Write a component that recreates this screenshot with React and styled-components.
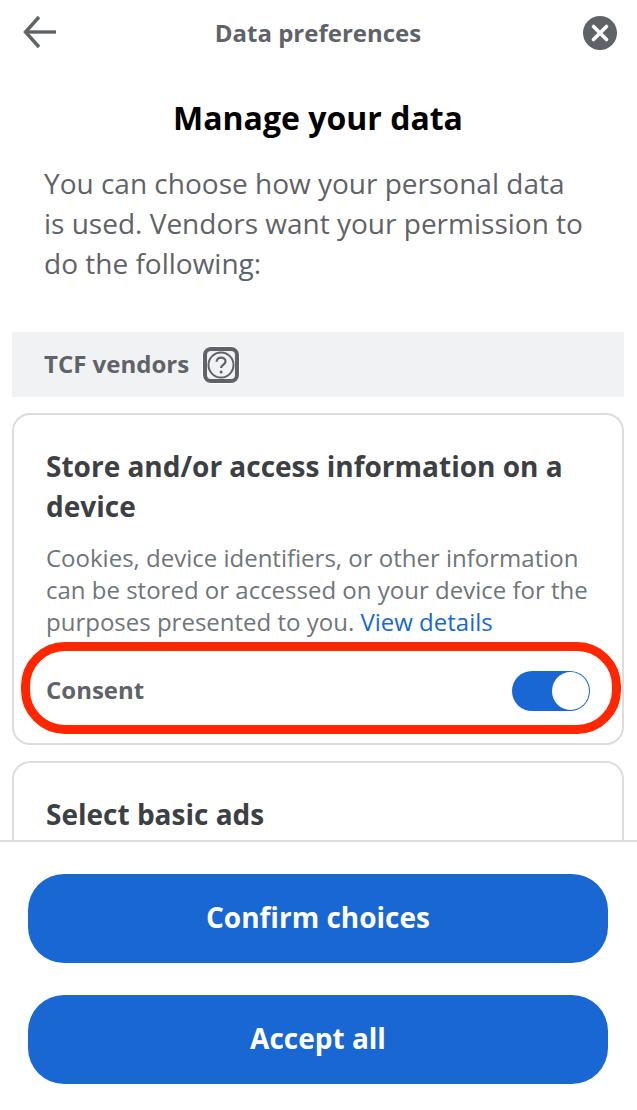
import React from 'react'
import styled, { createGlobalStyle } from 'styled-components'

const Global = createGlobalStyle`
  html, body { margin: 0; padding: 0; background: #fff; }
  body { font-family: "Open Sans", "Noto Sans", sans-serif; }
`

const Page = styled.div`
  width: 637px;
  height: 1110px;
  display: flex;
  flex-direction: column;
  overflow: hidden;
`
const Scroll = styled.div`
  flex: 1;
  min-height: 0;
  overflow: hidden;
`
const Header = styled.div`
  height: 66px;
  display: flex;
  align-items: center;
  justify-content: space-between;
  padding: 0 19px 0 22px;
`
const HeaderTitle = styled.div`
  font-size: 24px;
  font-weight: 700;
  color: #5f6368;
  margin: -2px 4px 0 0;
`
const IconButton = styled.div`
  width: 36px;
  height: 36px;
  display: flex;
  align-items: center;
  justify-content: center;
`
const Title = styled.h1`
  margin: 30px 1px 0 0;
  font-size: 32px;
  line-height: 44px;
  font-weight: 700;
  color: #000;
  text-align: center;
`
const Intro = styled.p`
  margin: 23px 0 0;
  padding: 0 50px 0 44px;
  font-size: 28px;
  line-height: 40px;
  color: #5f6368;
`
const Band = styled.div`
  margin: 49px 13px 0 12px;
  height: 65px;
  padding-left: 32px;
  display: flex;
  align-items: center;
  gap: 13px;
  background: #f1f2f4;
  font-size: 24px;
  font-weight: 700;
  color: #5f6368;
`
const BandLabel = styled.span`
  margin-top: -2px;
`
const HelpIcon = styled.span`
  display: flex;
`
const Card = styled.section`
  position: relative;
  margin: ${p => p.$top}px 13px 0 12px;
  box-sizing: border-box;
  height: ${p => p.$height}px;
  padding: 31px 24px 0 32px;
  border: 2px solid #dcdce1;
  border-radius: 18px;
  background: #fff;
`
const CardTitle = styled.h2`
  margin: 0;
  font-size: 28px;
  line-height: 40px;
  font-weight: 700;
  color: #3c4043;
`
const CardText = styled.p`
  margin: 16px 0 0;
  font-size: 24px;
  line-height: 32px;
  color: #70757a;
`
const Details = styled.a`
  color: #1967d2;
`
const ConsentRow = styled.div`
  display: flex;
  align-items: center;
  justify-content: space-between;
  margin-top: 29px;
  height: 44px;
  padding-right: 8px;
  font-size: 24px;
  font-weight: 700;
  color: #5f6368;
`
const Toggle = styled.span`
  width: 78px;
  height: 40px;
  margin-top: 4px;
  box-sizing: border-box;
  border-radius: 20px;
  background: #1967d2;
  padding: 1px;
  display: flex;
  justify-content: flex-end;
`
const Knob = styled.span`
  width: 37px;
  height: 38px;
  border-radius: 50%;
  background: #fff;
`
const Highlight = styled.div`
  position: absolute;
  left: 7px;
  top: 227px;
  width: 600px;
  height: 92px;
  box-sizing: border-box;
  border: 9px solid #ff2600;
  border-radius: 44px;
  pointer-events: none;
`
const Footer = styled.div`
  flex: none;
  height: 270px;
  box-sizing: border-box;
  border-top: 2px solid #dcdce1;
  background: #fff;
  padding: 32px 29px 0 28px;
  display: flex;
  flex-direction: column;
  gap: 32px;
`
const Button = styled.button`
  height: 89px;
  border: 0;
  border-radius: 36px;
  padding: 0 0 4px;
  background: #1967d2;
  color: #fff;
  font-family: inherit;
  font-size: 28px;
  font-weight: 700;
`

const App = () => (
  <Page>
    <Global />
    <Scroll>
      <Header>
        <IconButton>
          <svg width="36" height="36" viewBox="0 0 36 36" fill="none" stroke="#5f6368" strokeWidth="3.4">
            <path d="M34 17H4" />
            <path d="M17 2L3.5 17L17 32" />
          </svg>
        </IconButton>
        <HeaderTitle>Data preferences</HeaderTitle>
        <IconButton>
          <svg width="34" height="34" viewBox="0 0 34 34">
            <circle cx="17" cy="17" r="17" fill="#5f6368" />
            <path d="M10.5 10.5L23.5 23.5M23.5 10.5L10.5 23.5" stroke="#fff" strokeWidth="3.6" strokeLinecap="round" />
          </svg>
        </IconButton>
      </Header>
      <Title>Manage your data</Title>
      <Intro>You can choose how your personal data is used. Vendors want your permission to do the following:</Intro>
      <Band>
        <BandLabel>TCF vendors</BandLabel>
        <HelpIcon>
          <svg width="38" height="38" viewBox="0 0 38 38" fill="none">
            <rect width="38" height="38" rx="11" fill="#fff" />
            <rect x="3" y="3" width="32" height="32" rx="6" fill="#f1f2f4" stroke="#5f6368" strokeWidth="4" />
            <circle cx="19" cy="19" r="12.500" stroke="#5f6368" strokeWidth="2" />
            <path d="M14.600 15.800c0-2.500 2-4.200 4.500-4.200s4.400 1.600 4.400 3.800c0 3.200-4.400 3.100-4.400 6.600" stroke="#5f6368" strokeWidth="2.200" />
            <circle cx="19.100" cy="26" r="1.500" fill="#5f6368" />
          </svg>
        </HelpIcon>
      </Band>
      <Card $top={16} $height={332}>
        <CardTitle>Store and/or access information on a device</CardTitle>
        <CardText>
          Cookies, device identifiers, or other information can be stored or accessed on your device for the purposes presented to you. <Details>View details</Details>
        </CardText>
        <ConsentRow>
          Consent
          <Toggle><Knob /></Toggle>
        </ConsentRow>
        <Highlight />
      </Card>
      <Card $top={16} $height={200}>
        <CardTitle>Select basic ads</CardTitle>
      </Card>
    </Scroll>
    <Footer>
      <Button>Confirm choices</Button>
      <Button>Accept all</Button>
    </Footer>
  </Page>
)

export default App
